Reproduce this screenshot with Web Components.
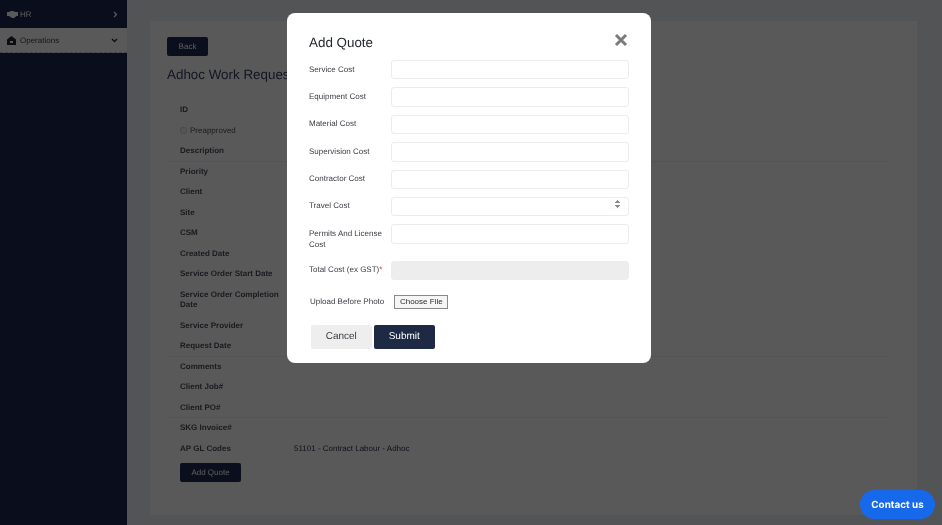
<!DOCTYPE html>
<html><head><meta charset="utf-8">
<style>
html,body{margin:0;padding:0;height:100%;overflow:hidden}
body{font-family:"Liberation Sans",Arial,sans-serif;text-rendering:geometricPrecision;filter:blur(.35px)}
</style></head>
<body>
<template id="t-side"><style>
:host{display:block;width:127px;height:525px;background:#1d2850;flex:none}
</style><slot></slot></template>

<template id="t-item"><style>
:host{display:flex;align-items:center;padding:0 9px 0 7px;height:var(--h,28px);font-size:8px;color:#fff;box-sizing:border-box}
:host([active]){background:#fff;color:#3a3f4c;border-bottom:1px dashed #c4c4c4}
.i{width:13px;flex:none;display:flex}
.l{flex:1}
</style><span class="i"><slot name="icon"></slot></span><span class="l"><slot></slot></span><slot name="arrow"></slot></template>

<template id="t-main"><style>
:host{display:block;flex:1;background:#edf0f5;padding:21px 25px 10px 23px;box-sizing:border-box;height:525px}
.card{background:#fff;height:494px;padding:16px 27px 16px 17px;box-sizing:border-box}
</style><div class="card"><slot></slot></div></template>

<template id="t-btn"><style>
:host{display:flex;align-items:center;justify-content:center;background:#222c55;color:#fff;font-size:8px;border-radius:2px;box-sizing:border-box}
</style><slot></slot></template>

<template id="t-row"><style>
:host{display:grid;grid-template-columns:114px 1fr;padding:5px 0 5px 13px;font-size:8px;line-height:10.5px;align-items:start;box-sizing:border-box;color:#2c3550}
:host([line]){border-top:1px solid #f0f0f0;margin-top:-1px}
.k{font-weight:700;color:#4a4f5c}
</style><div class="k"><slot name="k"></slot></div><div><slot></slot></div></template>

<template id="t-modal"><style>
:host{position:fixed;inset:0;background:rgba(0,0,0,.65);display:block}
.box{position:absolute;left:287px;top:13px;width:364px;height:350px;background:#fff;border-radius:8px;padding:21px 22px 0;box-sizing:border-box;color:#25282e}
.head{display:flex;justify-content:space-between;align-items:flex-start;height:26px}
h2{margin:0;font-weight:400;font-size:13.4px;line-height:17px}
.x{margin:-1px 1px 0 0}
.foot{display:flex;gap:2.5px;margin:16px 0 0 2px}
</style><div class="box"><div class="head"><h2>Add Quote</h2><svg class="x" width="14" height="14" viewBox="0 0 14 14"><path d="M2 2 12 12M12 2 2 12" stroke="#7a7a7a" stroke-width="3" fill="none"/></svg></div><slot></slot><div class="foot"><slot name="foot"></slot></div></div></template>

<template id="t-field"><style>
:host{display:grid;grid-template-columns:82px 238px;margin-bottom:8px;font-size:8px;line-height:11.2px;color:#3a3d44}
.l{padding-top:3.5px}
input{box-sizing:border-box;width:238px;height:19.4px;border:1px solid #ececec;border-radius:3px;background:#fff;padding:0 3px 0 8px;display:block;outline:0}
input[disabled]{background:#ededed;border-color:#ededed}
input::-webkit-inner-spin-button{opacity:1;height:10px}
:host([tall]){margin-bottom:10.5px}
</style><div class="l"><slot></slot></div><input></template>

<template id="t-upload"><style>
:host{display:flex;align-items:center;margin:15px 0 0 1px;font-size:8px;color:#3a3d44;gap:10px}
button{font:inherit;color:#2c2c2c;height:13.5px;width:54px;padding:0;background:#f5f5f5;border:1px solid #8a8a8a;border-radius:0}
</style><span><slot></slot></span><button>Choose File</button></template>

<template id="t-act"><style>
:host{display:flex;align-items:center;justify-content:center;height:24px;width:60.5px;font-size:10px;background:#eeeeee;color:#3a3d44;border-radius:2px}
:host([primary]){background:#1e2a44;color:#fff}
</style><slot></slot></template>

<template id="t-contact"><style>
:host{position:fixed;left:860px;top:490px;width:75px;height:29px;border-radius:15px;background:#1769ec;color:#fff;font:700 9.9px "Inter","Liberation Sans",sans-serif;display:flex;align-items:center;justify-content:center}
</style><slot></slot></template>

<template id="t-check"><style>
:host{display:inline-block;width:7px;height:7px;border:1px solid #d8d8d8;border-radius:2px;background:#f4f4f4;box-sizing:border-box;vertical-align:-1px;margin-right:3px}
</style></template>

<app-shell-row style="display:flex;height:525px">
<app-sidebar>
  <side-item>
    <svg slot="icon" width="11" height="9" viewBox="0 0 11 9"><path d="M0 2h2l2-1h2l1 .6L9 2h2v4H9.5L7 8H5L2 6H0z" fill="#fff"/></svg>HR
    <svg slot="arrow" width="5" height="7" viewBox="0 0 5 7"><path d="M1 1l2.5 2.5L1 6" stroke="#fff" stroke-width="1.3" fill="none"/></svg>
  </side-item>
  <side-item active style="--h:25px">
    <svg slot="icon" width="9" height="9" viewBox="0 0 9 9"><path d="M4.5 0 9 3.6V9H0V3.6z" fill="#23262e"/><path d="M3 5h3v2H3z" fill="#fff"/></svg>Operations
    <svg slot="arrow" width="7" height="5" viewBox="0 0 7 5"><path d="M1 1l2.5 2.5L6 1" stroke="#23262e" stroke-width="1.3" fill="none"/></svg>
  </side-item>
</app-sidebar>
<app-main>
  <dark-btn style="width:41px;height:19px">Back</dark-btn>
  <detail-title style="display:block;font-size:13.4px;line-height:17px;color:#3a4266;margin:10px 0 17px">Adhoc Work Request</detail-title>
  <detail-row><span slot="k">ID</span></detail-row>
  <detail-row><span slot="k" style="font-weight:400"><mini-check></mini-check>Preapproved</span></detail-row>
  <detail-row><span slot="k">Description</span></detail-row>
  <detail-row line><span slot="k">Priority</span></detail-row>
  <detail-row><span slot="k">Client</span></detail-row>
  <detail-row><span slot="k">Site</span></detail-row>
  <detail-row><span slot="k">CSM</span></detail-row>
  <detail-row><span slot="k">Created Date</span></detail-row>
  <detail-row><span slot="k">Service Order Start Date</span></detail-row>
  <detail-row><span slot="k" style="display:block;width:105px">Service Order Completion Date</span></detail-row>
  <detail-row><span slot="k">Service Provider</span></detail-row>
  <detail-row><span slot="k">Request Date</span></detail-row>
  <detail-row line><span slot="k">Comments</span></detail-row>
  <detail-row><span slot="k">Client Job#</span></detail-row>
  <detail-row><span slot="k">Client PO#</span></detail-row>
  <detail-row line><span slot="k">SKG Invoice#</span></detail-row>
  <detail-row><span slot="k">AP GL Codes</span>51101 - Contract Labour - Adhoc</detail-row>
  <dark-btn style="width:61px;height:19px;margin:4px 0 0 13px">Add Quote</dark-btn>
</app-main>
</app-shell-row>

<quote-modal>
  <quote-field>Service Cost</quote-field>
  <quote-field>Equipment Cost</quote-field>
  <quote-field>Material Cost</quote-field>
  <quote-field>Supervision Cost</quote-field>
  <quote-field>Contractor Cost</quote-field>
  <quote-field number>Travel Cost</quote-field>
  <quote-field tall>Permits And License Cost</quote-field>
  <quote-field disabled>Total Cost (ex GST)<span style="color:#e02020">*</span></quote-field>
  <quote-upload>Upload Before Photo</quote-upload>
  <quote-action slot="foot">Cancel</quote-action>
  <quote-action slot="foot" primary>Submit</quote-action>
</quote-modal>
<contact-us>Contact us</contact-us>

<script>
function def(name,tpl,init){
  customElements.define(name,class extends HTMLElement{
    constructor(){super();const r=this.attachShadow({mode:'open'});
      if(tpl)r.appendChild(document.getElementById(tpl).content.cloneNode(true));
      else r.innerHTML='<style>:host{display:block}</style><slot></slot>';}
    connectedCallback(){if(init)init(this)}
  });
}
def('app-shell-row',null);
def('app-sidebar','t-side');
def('side-item','t-item');
def('app-main','t-main');
def('dark-btn','t-btn');
def('detail-title',null);
def('detail-row','t-row');
def('mini-check','t-check');
def('quote-modal','t-modal');
def('quote-field','t-field',el=>{
  const i=el.shadowRoot.querySelector('input');
  if(el.hasAttribute('number'))i.type='number';
  if(el.hasAttribute('disabled'))i.disabled=true;
});
def('quote-upload','t-upload');
def('quote-action','t-act');
def('contact-us','t-contact');
</script>
</body></html>
